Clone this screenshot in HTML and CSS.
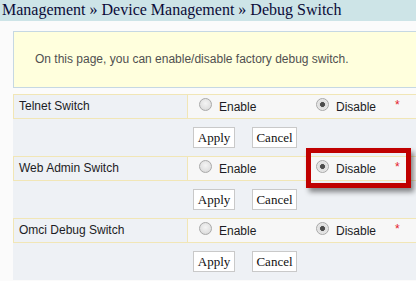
FILE: index.html
```html
<!DOCTYPE html>
<html lang="en">
<head>
    <meta charset="UTF-8">
    <title>Debug Switch</title>
    <link rel="stylesheet" href="styles.css">
</head>
<body>
    <div class="crumb">Management &raquo; Device Management &raquo; Debug Switch</div>

    <div class="content">
        <div class="notice">On this page, you can enable/disable factory debug switch.</div>
        <div class="gap"></div>

        <div class="switch">
            <div class="row">
                <div class="label">Telnet Switch</div>
                <div class="opts">
                    <label class="opt"><span class="radio"></span>Enable</label>
                    <label class="opt"><span class="radio checked"></span>Disable</label>
                    <span class="req">*</span>
                </div>
            </div>
            <div class="actions">
                <button class="btn btn-apply">Apply</button>
                <button class="btn btn-cancel">Cancel</button>
            </div>
        </div>

        <div class="switch">
            <div class="row">
                <div class="label">Web Admin Switch</div>
                <div class="opts">
                    <label class="opt"><span class="radio"></span>Enable</label>
                    <label class="opt"><span class="radio checked"></span>Disable</label>
                    <span class="req">*</span>
                </div>
                <div class="highlight"></div>
            </div>
            <div class="actions">
                <button class="btn btn-apply">Apply</button>
                <button class="btn btn-cancel">Cancel</button>
            </div>
        </div>

        <div class="switch">
            <div class="row">
                <div class="label">Omci Debug Switch</div>
                <div class="opts">
                    <label class="opt"><span class="radio"></span>Enable</label>
                    <label class="opt"><span class="radio checked"></span>Disable</label>
                    <span class="req">*</span>
                </div>
            </div>
            <div class="actions">
                <button class="btn btn-apply">Apply</button>
                <button class="btn btn-cancel">Cancel</button>
            </div>
        </div>
    </div>
</body>
</html>
```

FILE: styles.css
```css
body {
    margin: 0;
    background-color: #fbfbfb;
    font-family: "Liberation Sans", Arial, sans-serif;
    font-size: 12px;
    overflow: hidden;
}

.crumb {
    height: 21px;
    line-height: 19px;
    padding-left: 2px;
    background-color: #cde4e7;
    color: #0b0b38;
    font-family: "Liberation Serif", "Times New Roman", serif;
    font-size: 16px;
    white-space: nowrap;
}

.content {
    margin-left: 13px;
    padding-top: 10px;
}

/* yellow help box */
.notice {
    height: 55px;
    line-height: 55px;
    margin-right: -20px;
    padding-left: 21px;
    background-color: #ffffdd;
    border: 1px solid #c6d8e3;
    color: #505050;
}

.gap {
    height: 6px;
}

.switch {
    background-color: #eef1f5;
}

.row {
    position: relative;
    display: flex;
    height: 23px;
    border-top: 1px solid #f1e6b6;
    border-bottom: 1px solid #f1e6b6;
    border-left: 1px solid #f1e6b6;
    color: #1c1c24;
}

.label {
    width: 168px;
    padding-left: 5px;
    line-height: 23px;
    background-color: #eef1f5;
    border-right: 1px solid #f1e6b6;
}

.opts {
    flex: 1;
    display: flex;
    align-items: center;
    padding-left: 11px;
    background-color: #f7f7f7;
}

.opt {
    display: flex;
    align-items: center;
    gap: 7px;
}

.opt:first-child {
    width: 117px;
}

.radio {
    width: 11px;
    height: 11px;
    margin-top: -4px;
    border: 1px solid #a9a9a9;
    border-radius: 50%;
    background: radial-gradient(circle at 50% 40%, #f4f4f4 0, #e2e2e2 60%, #cfcfcf 100%);
}

.radio.checked {
    background: radial-gradient(circle, #4c4c4c 0, #4c4c4c 28%, #dcdcdc 36%, #e8e8e8 70%, #d0d0d0 100%);
}

.req {
    margin-left: 19px;
    margin-top: -3px;
    color: #e4202a;
    font-size: 12px;
}

/* the red annotation frame round the web admin option */
.highlight {
    position: absolute;
    left: 292px;
    top: -9px;
    width: 105px;
    height: 40px;
    box-sizing: border-box;
    border: 5px solid #c00000;
    box-shadow: 3px 4px 5px rgba(0, 0, 0, 0.45);
}

.actions {
    display: flex;
    gap: 17px;
    padding: 8px 0 8px 180px;
}

.btn {
    height: 21px;
    padding: 0;
    background-color: #ffffff;
    border: 1px solid #c9c9c9;
    color: #111111;
    font-family: "Liberation Serif", "Times New Roman", serif;
    font-size: 13px;
}

.btn-apply {
    width: 42px;
}

.btn-cancel {
    width: 45px;
}
```
